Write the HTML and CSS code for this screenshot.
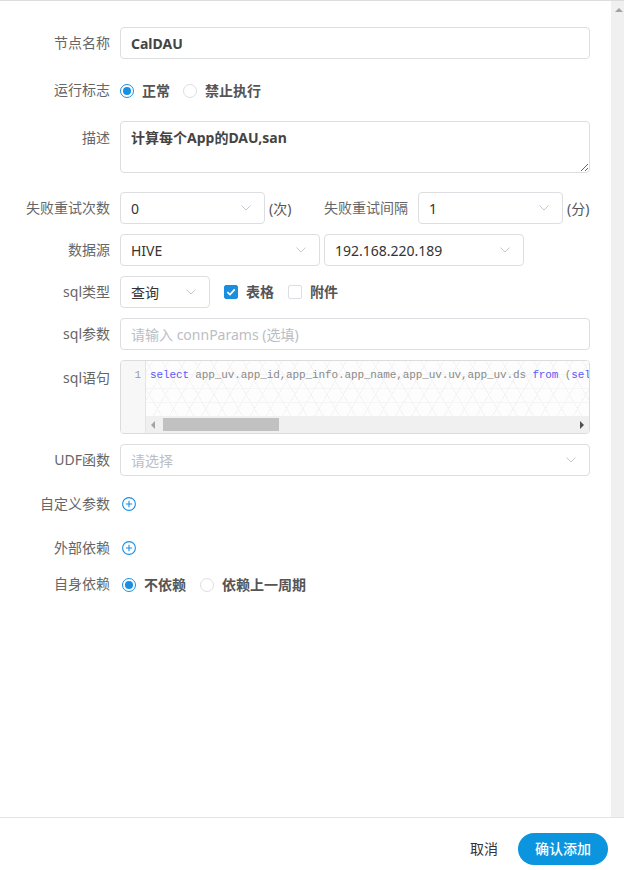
FILE: index.html
```html
<!DOCTYPE html>
<html lang="zh-CN">
<head>
<meta charset="utf-8">
<title>节点</title>
<link rel="stylesheet" href="styles.css">
</head>
<body>
<div class="page">
  <div class="main">
    <div class="form">
      <div class="row row-first">
        <div class="label">节点名称</div>
        <input class="control input w-full value-strong" type="text" value="CalDAU">
      </div>

      <div class="row row-15">
        <div class="label">运行标志</div>
        <div class="option"><span class="radio checked"></span><span class="opt-text">正常</span></div>
        <div class="option next"><span class="radio"></span><span class="opt-text">禁止执行</span></div>
      </div>

      <div class="row row-15 row-top">
        <div class="label label-ta">描述</div>
        <textarea class="control textarea w-full value-strong">计算每个App的DAU,san</textarea>
      </div>

      <div class="row row-19">
        <div class="label">失败重试次数</div>
        <div class="control select w-145"><span>0</span><svg class="chev" width="10" height="6" viewBox="0 0 10 6"><path d="M0.5 0.5 L5 5 L9.5 0.5" fill="none" stroke="#c5c8ce" stroke-width="1"/></svg></div>
        <span class="unit">(次)</span>
        <div class="label">失败重试间隔</div>
        <div class="control select w-145"><span>1</span><svg class="chev" width="10" height="6" viewBox="0 0 10 6"><path d="M0.5 0.5 L5 5 L9.5 0.5" fill="none" stroke="#c5c8ce" stroke-width="1"/></svg></div>
        <span class="unit">(分)</span>
      </div>

      <div class="row">
        <div class="label">数据源</div>
        <div class="control select w-200"><span>HIVE</span><svg class="chev" width="10" height="6" viewBox="0 0 10 6"><path d="M0.5 0.5 L5 5 L9.5 0.5" fill="none" stroke="#c5c8ce" stroke-width="1"/></svg></div>
        <div class="control select w-200 gap-left"><span>192.168.220.189</span><svg class="chev" width="10" height="6" viewBox="0 0 10 6"><path d="M0.5 0.5 L5 5 L9.5 0.5" fill="none" stroke="#c5c8ce" stroke-width="1"/></svg></div>
      </div>

      <div class="row">
        <div class="label">sql类型</div>
        <div class="control select w-90"><span>查询</span><svg class="chev" width="10" height="6" viewBox="0 0 10 6"><path d="M0.5 0.5 L5 5 L9.5 0.5" fill="none" stroke="#c5c8ce" stroke-width="1"/></svg></div>
        <div class="check-opt"><span class="checkbox checked"><svg width="14" height="14" viewBox="0 0 14 14"><path d="M3.3 7.1 L6 9.6 L10.7 4.4" fill="none" stroke="#fff" stroke-width="1.7"/></svg></span><span class="opt-text">表格</span></div>
        <div class="check-opt"><span class="checkbox"></span><span class="opt-text">附件</span></div>
      </div>

      <div class="row">
        <div class="label">sql参数</div>
        <input class="control input w-full" type="text" placeholder="请输入 connParams (选填)">
      </div>

      <div class="row row-top">
        <div class="label label-editor">sql语句</div>
        <div class="editor">
          <div class="gutter">1</div>
          <div class="code-area">
            <div class="code"><span class="kw">select</span> app_uv.app_id,app_info.app_name,app_uv.uv,app_uv.ds <span class="kw">from</span> (<span class="kw">sel</span></div>
            <div class="hscroll">
              <span class="arr-left"></span>
              <span class="thumb"></span>
              <span class="spacer"></span>
              <span class="arr-right"></span>
            </div>
          </div>
        </div>
      </div>

      <div class="row">
        <div class="label">UDF函数</div>
        <div class="control select w-full"><span class="placeholder">请选择</span><svg class="chev" width="10" height="6" viewBox="0 0 10 6"><path d="M0.5 0.5 L5 5 L9.5 0.5" fill="none" stroke="#c5c8ce" stroke-width="1"/></svg></div>
      </div>

      <div class="row row-12">
        <div class="label">自定义参数</div>
        <span class="plus"><svg width="14" height="14" viewBox="0 0 14 14"><circle cx="7" cy="7" r="6.4" fill="none" stroke="#1a8fe0" stroke-width="1.1"/><path d="M7 3.8 V10.2 M3.8 7 H10.2" stroke="#1a8fe0" stroke-width="1.1"/></svg></span>
      </div>

      <div class="row row-12">
        <div class="label">外部依赖</div>
        <span class="plus"><svg width="14" height="14" viewBox="0 0 14 14"><circle cx="7" cy="7" r="6.4" fill="none" stroke="#1a8fe0" stroke-width="1.1"/><path d="M7 3.8 V10.2 M3.8 7 H10.2" stroke="#1a8fe0" stroke-width="1.1"/></svg></span>
      </div>

      <div class="row row-4">
        <div class="label">自身依赖</div>
        <div class="option shift"><span class="radio checked"></span><span class="opt-text">不依赖</span></div>
        <div class="option next2"><span class="radio"></span><span class="opt-text">依赖上一周期</span></div>
      </div>
    </div>
    <div class="vscroll"><span class="arr-up"></span></div>
  </div>
  <div class="footer">
    <span class="btn-cancel">取消</span>
    <span class="btn-primary">确认添加</span>
  </div>
</div>
</body>
</html>
```

FILE: styles.css
```css
html, body {
  margin: 0;
  padding: 0;
  background: #fff;
}

body {
  font-family: "Noto Sans", "Noto Sans CJK SC", sans-serif;
  font-size: 14px;
  color: #333;
}

.page {
  width: 624px;
  height: 870px;
  box-sizing: border-box;
  border-top: 1px solid #dddddd;
  display: flex;
  flex-direction: column;
}

.main {
  flex: 1;
  min-height: 0;
  display: flex;
}

.form {
  flex: 1;
  padding-top: 26px;
}

.vscroll {
  width: 13px;
  background: #f0f0f0;
  display: flex;
  justify-content: center;
  align-items: flex-start;
  padding-top: 7px;
  box-sizing: border-box;
  padding-left: 3px;
}

.arr-up {
  width: 0;
  height: 0;
  border-left: 4px solid transparent;
  border-right: 4px solid transparent;
  border-bottom: 4px solid #a3a3a3;
}

.row {
  display: flex;
  align-items: center;
  margin-top: 10px;
  height: 32px;
}

.row-first { margin-top: 0; }
.row-15 { margin-top: 15px; }
.row-19 { margin-top: 19px; }
.row-12 { margin-top: 12px; }
.row-4 { margin-top: 4px; }

.row-top {
  align-items: flex-start;
  height: auto;
}

.label {
  width: 120px;
  flex: none;
  box-sizing: border-box;
  padding-right: 10px;
  text-align: right;
  color: #666;
  line-height: 20px;
  white-space: nowrap;
}

.label-ta { margin-top: 7px; }
.label-editor { margin-top: 8px; }

.control {
  height: 32px;
  box-sizing: border-box;
  border: 1px solid #dcdee2;
  border-radius: 4px;
  background: #fff;
  padding: 0 10px;
  font-family: "Noto Sans", "Noto Sans CJK SC", sans-serif;
  font-size: 14px;
  color: #333;
  flex: none;
  outline: none;
}

.input {
  line-height: 30px;
}

.input::placeholder {
  color: #bbbec4;
}

.value-strong {
  font-weight: 700;
  color: #444;
}

.textarea {
  height: 52px;
  padding: 6px 10px 5px;
  line-height: 20px;
  resize: vertical;
  display: block;
}

.w-full { width: 470px; }
.w-145 { width: 145px; }
.w-200 { width: 200px; }
.w-90 { width: 90px; }
.gap-left { margin-left: 4px; }

.select {
  display: flex;
  align-items: center;
  justify-content: space-between;
  padding-right: 13px;
}

.chev { flex: none; }

.placeholder { color: #bbbec4; }

.unit {
  width: 29px;
  margin-left: 4px;
  flex: none;
  color: #555;
  white-space: nowrap;
}

.option {
  display: flex;
  align-items: center;
  padding-top: 1px;
}

.option.next { margin-left: 13px; }
.option.shift { margin-left: 2px; }
.option.next2 { margin-left: 14px; }

.opt-text {
  margin-left: 8px;
  font-weight: 700;
  color: #555;
  line-height: 20px;
}

.radio {
  width: 14px;
  height: 14px;
  box-sizing: border-box;
  border: 1px solid #dcdee2;
  border-radius: 50%;
  background: #fff;
  display: flex;
  align-items: center;
  justify-content: center;
  flex: none;
}

.radio.checked {
  border-color: #1a8fe0;
}

.radio.checked::after {
  content: "";
  width: 8px;
  height: 8px;
  border-radius: 50%;
  background: #1a8fe0;
}

.check-opt {
  display: flex;
  align-items: center;
  margin-left: 14px;
}

.checkbox {
  width: 14px;
  height: 14px;
  box-sizing: border-box;
  border: 1px solid #dcdee2;
  border-radius: 2px;
  background: #fff;
  display: flex;
  flex: none;
}

.checkbox.checked {
  background: #1a8fe0;
  border-color: #1a8fe0;
}

.checkbox svg {
  margin: -1px;
}

.editor {
  width: 470px;
  height: 74px;
  box-sizing: border-box;
  border: 1px solid #dcdcdc;
  border-radius: 4px;
  display: flex;
  overflow: hidden;
  flex: none;
}

.gutter {
  width: 25px;
  box-sizing: border-box;
  background: #f7f7f7;
  border-right: 1px solid #e4e4e4;
  text-align: right;
  padding: 4px 4px 0 0;
  font-family: "Liberation Mono", monospace;
  font-size: 11px;
  line-height: 20px;
  color: #999;
  flex: none;
}

.code-area {
  flex: 1;
  min-width: 0;
  display: flex;
  flex-direction: column;
}

.code {
  flex: 1;
  padding: 4px 0 0 4px;
  white-space: pre;
  overflow: hidden;
  font-family: "Liberation Mono", monospace;
  font-size: 11px;
  letter-spacing: -0.12px;
  line-height: 20px;
  color: #8a8a8a;
  background-color: #fdfdfd;
  background-image:
    repeating-linear-gradient(60deg, transparent 0 13px, #f4f4f4 13px 14px),
    repeating-linear-gradient(-60deg, transparent 0 13px, #f4f4f4 13px 14px),
    repeating-linear-gradient(0deg, transparent 0 13px, #f5f5f5 13px 14px);
}

.kw { color: #5a5af6; }

.hscroll {
  height: 17px;
  flex: none;
  background: #f0f0f0;
  display: flex;
  align-items: center;
  padding: 0 5px;
}

.arr-left {
  width: 0;
  height: 0;
  border-top: 4px solid transparent;
  border-bottom: 4px solid transparent;
  border-right: 4px solid #a3a3a3;
  flex: none;
}

.thumb {
  width: 116px;
  height: 13px;
  background: #c1c1c1;
  margin-left: 8px;
  flex: none;
}

.spacer { flex: 1; }

.arr-right {
  width: 0;
  height: 0;
  border-top: 4px solid transparent;
  border-bottom: 4px solid transparent;
  border-left: 4px solid #505050;
  flex: none;
}

.plus {
  margin-left: 2px;
  display: flex;
}

.footer {
  height: 53px;
  box-sizing: border-box;
  border-top: 1px solid #e3e3e3;
  display: flex;
  justify-content: flex-end;
  align-items: flex-start;
  padding: 15px 16px 0 0;
  flex: none;
}

.btn-cancel {
  line-height: 32px;
  margin-right: 20px;
  color: #333;
}

.btn-primary {
  width: 90px;
  height: 32px;
  border-radius: 16px;
  background: #0b95df;
  color: #fff;
  line-height: 32px;
  text-align: center;
  font-weight: 500;
}
```
